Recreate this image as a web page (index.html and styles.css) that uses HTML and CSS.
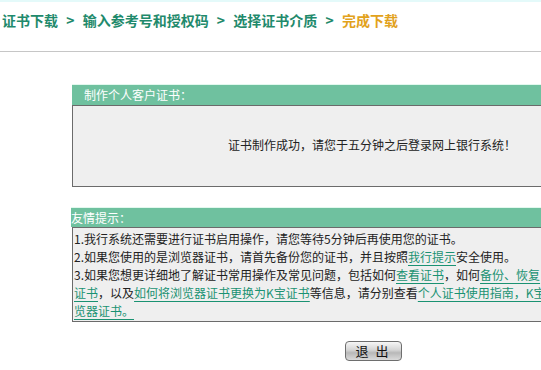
FILE: index.html
```html
<!DOCTYPE html>
<html lang="zh-CN">
<head>
  <meta charset="UTF-8" />
  <title>证书下载</title>
  <link rel="stylesheet" href="styles.css">
</head>
<body>

<!-- 步骤导航 -->
<div class="crumbs">
  <span class="step">证书下载</span>
  <span class="sep">&gt;</span>
  <span class="step">输入参考号和授权码</span>
  <span class="sep">&gt;</span>
  <span class="step">选择证书介质</span>
  <span class="sep">&gt;</span>
  <span class="step current">完成下载</span>
</div>

<div class="main">
  <!-- 制作结果 -->
  <div class="panel">
    <div class="panel-title">制作个人客户证书：</div>
    <div class="panel-body result">证书制作成功，请您于五分钟之后登录网上银行系统！</div>
  </div>

  <!-- 提示 -->
  <div class="panel tips">
    <div class="panel-title">友情提示：</div>
    <div class="panel-body">
      <p>1.我行系统还需要进行证书启用操作，请您等待5分钟后再使用您的证书。</p>
      <p>2.如果您使用的是浏览器证书，请首先备份您的证书，并且按照<a href="#">我行提示</a>安全使用。</p>
      <p>3.如果您想更详细地了解证书常用操作及常见问题，包括如何<a href="#">查看证书</a>，如何<a href="#">备份、恢复<br>证书</a>，以及<a href="#">如何将浏览器证书更换为K宝证书</a>等信息，请分别查看<a href="#">个人证书使用指南，K宝<br>览器证书。</a></p>
    </div>
  </div>

  <div class="actions">
    <button type="button" class="btn">退 出</button>
  </div>
</div>

</body>
</html>
```

FILE: styles.css
```css
html, body {
    overflow: hidden;
}

body {
    margin: 0;
    font-family: "Noto Sans CJK SC", "Liberation Sans", sans-serif;
    font-size: 12px;
    color: #222;
    background: #fff;
}

/* 步骤导航 */
.crumbs {
    height: 41px;
    padding: 8px 0 0 2px;
    border-top: 2px solid #e4fafa;
    border-bottom: 1px solid #c6c6c6;
    font-size: 14px;
    font-weight: bold;
    line-height: 20px;
    color: #1f8a6c;
    white-space: nowrap;
}

.sep {
    margin: 0 5px;
}

.current {
    color: #e2a21c;
}

/* 内容区 */
.main {
    width: 594px;
    margin: 33px 0 0 72px;
}

.panel-title {
    height: 20px;
    padding-left: 12px;
    line-height: 20px;
    color: #fff;
    background: #6fc19f;
    border-top: 1px solid #e2f8ee;
    margin-top: -1px;
}

.panel-body {
    border: 1px solid #6b6b6b;
    background: #efefef;
}

.result {
    height: 76px;
    padding: 0 0 4px 6px;
    display: flex;
    align-items: center;
    justify-content: center;
}

.tips {
    margin-top: 21px;
}

.tips .panel-title {
    height: 19px;
    line-height: 19px;
    padding-left: 0;
    margin-left: -1px;
}

.tips .panel-body {
    padding: 2px 0 1px 1px;
    white-space: nowrap;
    overflow: hidden;
}

.tips p {
    margin: 0;
    line-height: 18px;
}

.tips a {
    color: #1a9272;
    text-underline-offset: 3px;
}

.actions {
    margin-top: 19px;
    padding-left: 8px;
    text-align: center;
}

.btn {
    width: 57px;
    height: 20px;
    padding: 0;
    border: 1px solid #6e6e6e;
    border-radius: 4px;
    background: linear-gradient(#f6f6f6, #d4d4d4 45%, #b8b8b8 60%, #dadada);
    font-family: "Noto Sans CJK SC", sans-serif;
    font-size: 13px;
    line-height: 18px;
    letter-spacing: 2px;
    color: #111;
    cursor: pointer;
}
```
